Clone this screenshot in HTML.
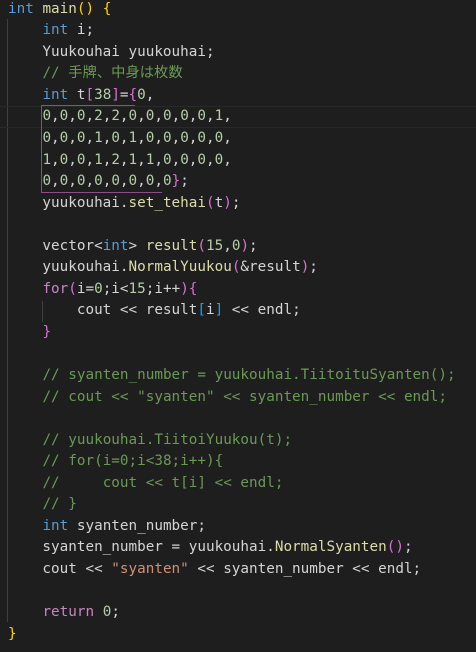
<!DOCTYPE html>
<html><head><meta charset="utf-8"><style>
html,body{margin:0;padding:0;background:#1e1e1e;width:476px;height:652px;overflow:hidden}
#c{position:absolute;left:8px;top:-1.3px;font-family:"DejaVu Sans Mono","Liberation Mono","Noto Sans CJK JP",monospace;font-size:14.3px;color:#d4d4d4}
#c div{height:21.55px;line-height:21.55px;white-space:pre;overflow:visible}
.k{color:#569cd6}.f{color:#dcdcaa}.n{color:#b5cea8}.c{color:#6a9955}.p{color:#c586c0}.s{color:#ce9178}
.b1{color:#ffd700}.b2{color:#da70d6}.b3{color:#179fff}
.g{position:absolute;width:1px;background:#404040}
</style></head><body>
<div class="g" style="left:7px;top:19px;height:603px"></div>
<div class="g" style="left:42px;top:301px;height:21px"></div>
<div style="position:absolute;left:0;top:106px;width:476px;height:20px;border-top:1px solid #282828;border-bottom:1px solid #282828"></div>
<div style="position:absolute;left:41px;top:105px;width:94px;height:0;border-top:1px solid #8a4f86"></div>
<div style="position:absolute;left:41px;top:105px;width:0;height:87px;border-left:1px solid #8a4f86"></div>
<div style="position:absolute;left:41px;top:192px;width:121px;height:0;border-top:1px solid #8a4f86"></div>
<div id="c">
<div><span class="k">int</span> <span class="f">main</span><span class="b1">()</span> <span class="b1">{</span></div>
<div>    <span class="k">int</span> i;</div>
<div>    Yuukouhai yuukouhai;</div>
<div>    <span class="c">// 手牌、中身は枚数</span></div>
<div>    <span class="k">int</span> t<span class="b2">[</span><span class="n">38</span><span class="b2">]</span>=<span class="b2">{</span><span class="n">0</span>,</div>
<div>    <span class="n">0</span>,<span class="n">0</span>,<span class="n">0</span>,<span class="n">2</span>,<span class="n">2</span>,<span class="n">0</span>,<span class="n">0</span>,<span class="n">0</span>,<span class="n">0</span>,<span class="n">0</span>,<span class="n">1</span>,</div>
<div>    <span class="n">0</span>,<span class="n">0</span>,<span class="n">0</span>,<span class="n">1</span>,<span class="n">0</span>,<span class="n">1</span>,<span class="n">0</span>,<span class="n">0</span>,<span class="n">0</span>,<span class="n">0</span>,<span class="n">0</span>,</div>
<div>    <span class="n">1</span>,<span class="n">0</span>,<span class="n">0</span>,<span class="n">1</span>,<span class="n">2</span>,<span class="n">1</span>,<span class="n">1</span>,<span class="n">0</span>,<span class="n">0</span>,<span class="n">0</span>,<span class="n">0</span>,</div>
<div>    <span class="n">0</span>,<span class="n">0</span>,<span class="n">0</span>,<span class="n">0</span>,<span class="n">0</span>,<span class="n">0</span>,<span class="n">0</span>,<span class="n">0</span><span class="b2">}</span>;</div>
<div>    yuukouhai.<span class="f">set_tehai</span><span class="b2">(</span>t<span class="b2">)</span>;</div>
<div> </div>
<div>    vector&lt;<span class="k">int</span>&gt; <span class="f">result</span><span class="b2">(</span><span class="n">15</span>,<span class="n">0</span><span class="b2">)</span>;</div>
<div>    yuukouhai.<span class="f">NormalYuukou</span><span class="b2">(</span>&amp;result<span class="b2">)</span>;</div>
<div>    <span class="p">for</span><span class="b2">(</span>i=<span class="n">0</span>;i&lt;<span class="n">15</span>;i++<span class="b2">)</span><span class="b2">{</span></div>
<div>        cout &lt;&lt; result<span class="b3">[</span>i<span class="b3">]</span> &lt;&lt; endl;</div>
<div>    <span class="b2">}</span></div>
<div> </div>
<div>    <span class="c">// syanten_number = yuukouhai.TiitoituSyanten();</span></div>
<div>    <span class="c">// cout &lt;&lt; "syanten" &lt;&lt; syanten_number &lt;&lt; endl;</span></div>
<div> </div>
<div>    <span class="c">// yuukouhai.TiitoiYuukou(t);</span></div>
<div>    <span class="c">// for(i=0;i&lt;38;i++){</span></div>
<div>    <span class="c">//     cout &lt;&lt; t[i] &lt;&lt; endl;</span></div>
<div>    <span class="c">// }</span></div>
<div>    <span class="k">int</span> syanten_number;</div>
<div>    syanten_number = yuukouhai.<span class="f">NormalSyanten</span><span class="b2">()</span>;</div>
<div>    cout &lt;&lt; <span class="s">"syanten"</span> &lt;&lt; syanten_number &lt;&lt; endl;</div>
<div> </div>
<div>    <span class="p">return</span> <span class="n">0</span>;</div>
<div><span class="b1">}</span></div>
</div>
</body></html>
